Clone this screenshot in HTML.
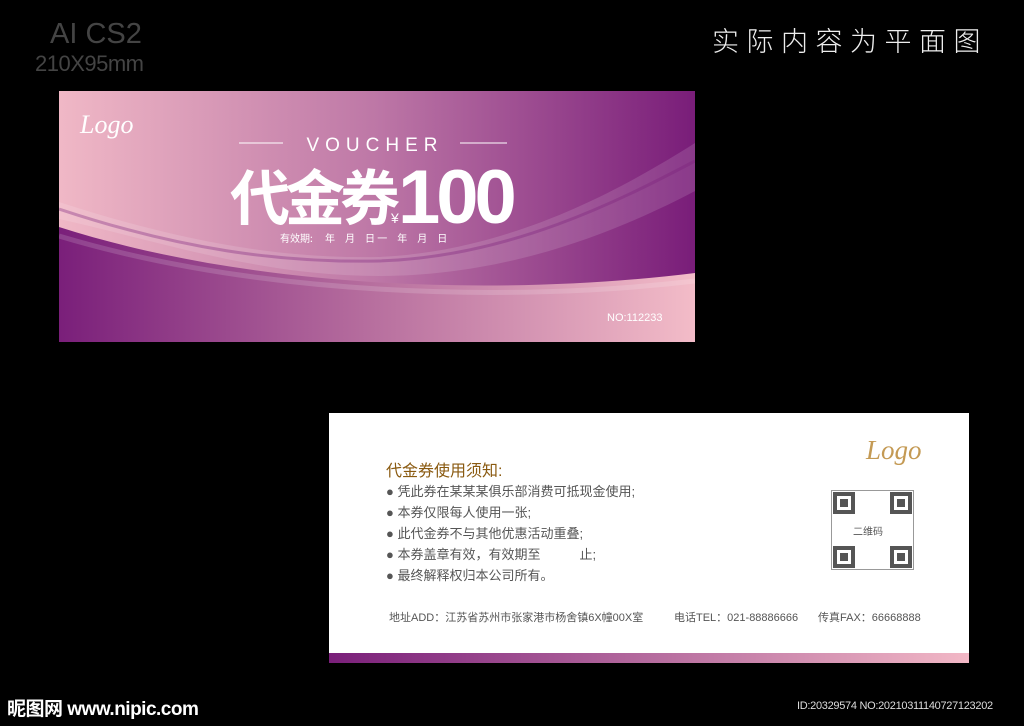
<!DOCTYPE html>
<html><head><meta charset="utf-8"><style>
body{margin:0;width:1024px;height:726px;background:#000;position:relative;overflow:hidden;font-family:"Liberation Sans","Noto Sans CJK SC",sans-serif}
.a{position:absolute;white-space:nowrap}
.c{position:absolute;width:14px;height:14px;border:4px solid #555;background:#fff}
.c div{margin:3px;width:8px;height:8px;background:#555}
</style></head><body>
<div class="a" style="left:50px;top:18px;font-size:29px;color:#444;font-weight:300">AI CS2</div>
<div class="a" style="left:35px;top:51px;font-size:22px;color:#444;letter-spacing:-0.5px">210X95mm</div>
<div class="a" style="left:712px;top:20px;font-size:27px;color:#eee;letter-spacing:7.5px;font-weight:300">实际内容为平面图</div>

<svg class="a" style="left:59px;top:91px" width="636" height="251" viewBox="0 0 636 251">
<defs>
<linearGradient id="g1" x1="0" x2="1"><stop offset="0" stop-color="#f0b8c6"/><stop offset="0.5" stop-color="#bd77a6"/><stop offset="1" stop-color="#791d79"/></linearGradient>
<linearGradient id="g2" x1="0" x2="1"><stop offset="0" stop-color="#7a1f7a"/><stop offset="0.5" stop-color="#b8709f"/><stop offset="1" stop-color="#f3bcc8"/></linearGradient>
</defs>
<rect width="636" height="251" fill="url(#g1)"/>
<path d="M0 111 C120 150 220 168 320 166 C450 160 560 100 636 52 L636 100 C560 140 450 185 320 185 C200 185 100 150 0 128Z" fill="#fff" opacity="0.13"/>
<path d="M0 118 C120 158 220 172 320 170 C450 166 560 110 636 70" stroke="#7a1f7a" stroke-opacity="0.35" stroke-width="3" fill="none"/>
<path d="M0 136 C200 200 450 205 636 182 L636 251 L0 251Z" fill="url(#g2)"/>
<path d="M0 145 C200 205 450 212 636 190" stroke="#fff" stroke-opacity="0.15" stroke-width="5" fill="none"/>
<text x="21" y="42" font-family="Liberation Serif,serif" font-style="italic" font-size="26" fill="#fff">Logo</text>
<line x1="180" y1="52" x2="224" y2="52" stroke="#fff" stroke-width="1"/>
<line x1="401" y1="52" x2="448" y2="52" stroke="#fff" stroke-width="1"/>
<text x="316" y="60" text-anchor="middle" font-family="Liberation Sans,sans-serif" font-size="19" letter-spacing="6" fill="#fff">VOUCHER</text>
<text x="171" y="129" font-family="Noto Sans CJK SC,sans-serif" font-weight="bold" font-size="60" fill="#fff" letter-spacing="-5">代金券</text>
<text x="332" y="132" font-family="Liberation Sans,sans-serif" font-size="14" fill="#fff">¥</text>
<text x="339" y="132" font-family="Liberation Sans,sans-serif" font-weight="bold" font-size="76" fill="#fff" letter-spacing="-4">100</text>
<text x="221" y="151" font-family="Noto Sans CJK SC,sans-serif" font-size="10" fill="#fff">有效期:　 年　月　日 一　年　月　日</text>
<text x="548" y="230" font-family="Liberation Sans,sans-serif" font-size="11" fill="#fff">NO:112233</text>
</svg>

<div class="a" style="left:329px;top:413px;width:640px;height:250px;background:#fff">
<div class="a" style="left:537px;top:22px;font-family:'Liberation Serif',serif;font-style:italic;font-size:27px;color:#c49a54">Logo</div>
<div class="a" style="left:57px;top:44px;font-size:16px;color:#8a5a10">代金券使用须知:</div>
<div class="a" style="left:57px;top:68px;font-size:13px;color:#555;line-height:21px">● 凭此券在某某某俱乐部消费可抵现金使用;<br>● 本券仅限每人使用一张;<br>● 此代金券不与其他优惠活动重叠;<br>● 本券盖章有效，有效期至　　　止;<br>● 最终解释权归本公司所有。</div>
<div class="a" style="left:502px;top:77px;width:83px;height:80px;border:1px solid #999;box-sizing:border-box">
<div class="c" style="left:1px;top:1px"><div></div></div>
<div class="c" style="right:1px;top:1px"><div></div></div>
<div class="c" style="left:1px;bottom:1px"><div></div></div>
<div class="c" style="right:1px;bottom:1px"><div></div></div>
<div class="a" style="left:21px;top:32px;font-size:10px;color:#555">二维码</div>
</div>
<div class="a" style="left:60px;top:196px;font-size:11px;color:#555">地址ADD：江苏省苏州市张家港市杨舍镇6X幢00X室</div>
<div class="a" style="left:345px;top:196px;font-size:11px;color:#555">电话TEL：021-88886666</div>
<div class="a" style="left:489px;top:196px;font-size:11px;color:#555">传真FAX：66668888</div>
<div class="a" style="left:0;top:240px;width:640px;height:10px;background:linear-gradient(90deg,#7a1f7a,#b56b9e 50%,#f2b8c6)"></div>
</div>

<div class="a" style="left:7px;top:694px;font-size:19px;color:#fff;font-weight:bold;letter-spacing:-0.5px">昵图网 www.nipic.com</div>
<div class="a" style="left:797px;top:700px;font-size:11px;color:#ddd;letter-spacing:-0.3px">ID:20329574 NO:20210311140727123202</div>
</body></html>
